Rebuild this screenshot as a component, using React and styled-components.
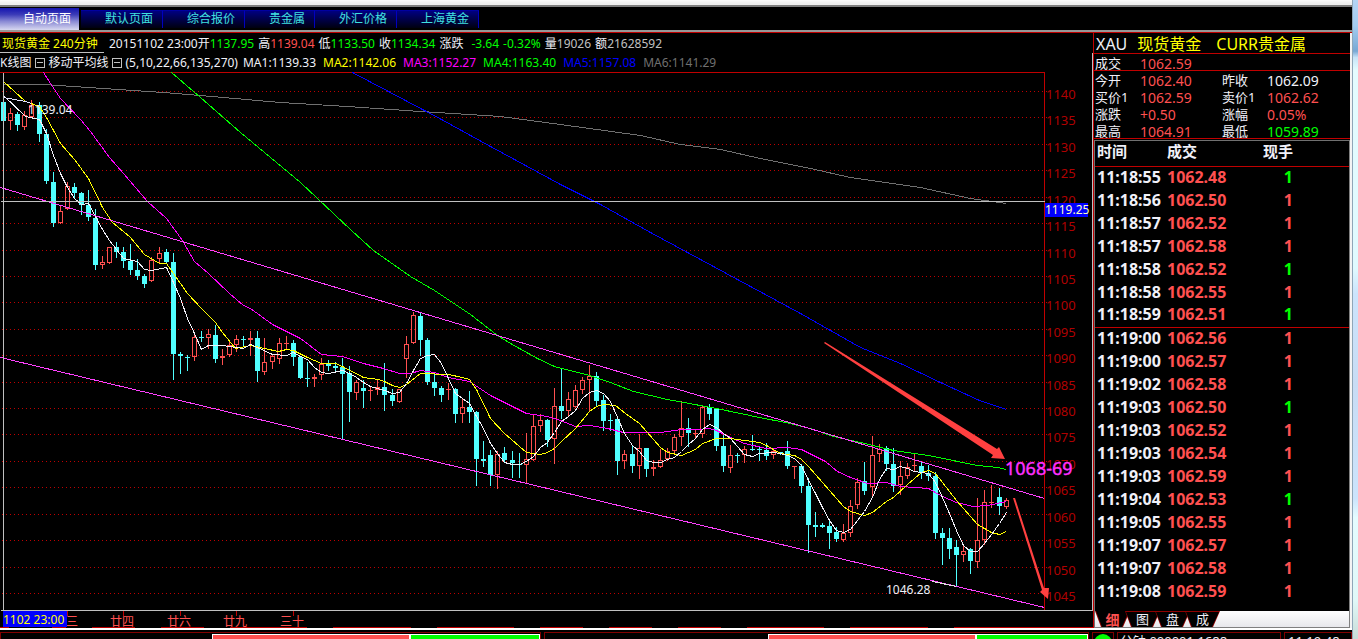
import React from "react";
import styled, { createGlobalStyle, css } from "styled-components";

const Global = createGlobalStyle`
  * { box-sizing: border-box; }
  html, body { margin: 0; background: #000; overflow: hidden; }
  body, button, table {
    font-family: "Noto Sans", "Noto Sans CJK SC", sans-serif;
  }
  button { margin: 0; padding: 0; border: 0; background: none; cursor: pointer; }
`;

const C = {
  red: "#ff5050",
  green: "#00ff00",
  cyan: "#50ffff",
  yellow: "#ffff00",
  magenta: "#ff00ff",
  blue: "#0000ff",
  gray: "#707070",
  white: "#f0f0f8",
  silver: "#c0c0c0",
  line: "#c00000",
};

const Desktop = styled.div`
  display: flex;
  height: 100vh;
  overflow: hidden;
`;

const Window = styled.div`
  flex: 1;
  min-width: 0;
  background: #000;
`;

const Edge = styled.div`
  width: 6px;
  border-left: 1px solid #8fa6b8;
  background: linear-gradient(
    #b4d4f4 0%, #a4ccf0 4%, #78a8d4 8%, #c8e4f8 9%, #e4fcff 11%, #e0faff 42%,
    #cce4fc 46%, #c8dcf4 60%, #cce4fc 78%, #e4fcff 81%, #e0f8f8 94%, #c8dcd8 100%
  );
`;

const TopStrip = styled.div`
  height: 7px;
  background: linear-gradient(#fcfcfc, #f0f0f0 3px);
  border-bottom: 2px solid #808080;
`;

const PageTabs = styled.nav`
  display: flex;
  align-items: center;
  height: 25px;
  border-bottom: 2px solid #989898;
`;

const PageTab = styled.button`
  height: 18px;
  padding: 0 9px 0 24px;
  border-top: 1px solid #0000a0;
  border-right: 1px solid #0000c0;
  background: linear-gradient(#000080, #000010);
  color: #40e0e0;
  font-size: 12px;
  line-height: 16px;
  white-space: nowrap;
  ${(p) =>
    p.$active &&
    css`
      height: 22px;
      padding: 0 8px 0 23px;
      border: 0;
      margin-right: 2px;
      background: linear-gradient(#1414b0, #3c3cb8 30%, #8888d4 60%, #d8d8f0);
      color: #fff;
      line-height: 20px;
    `}
`;

const Body = styled.main`
  display: flex;
  border-top: 1px solid ${C.line};
`;

const ChartPane = styled.section`
  flex: 1;
  min-width: 0;
`;

const InfoRow = styled.div`
  display: flex;
  align-items: center;
  height: ${(p) => p.$h}px;
  font-size: 12px;
  line-height: ${(p) => p.$lh ?? p.$h}px;
  white-space: nowrap;
`;

const Instrument = styled.div`
  height: 20px;
  width: 104px;
  margin-right: 5px;
  padding-left: 2px;
  border-bottom: 1px solid ${C.silver};
  color: ${C.yellow};
`;

const Item = styled.span`
  height: 100%;
  margin-right: ${(p) => p.$gap ?? 4}px;
  color: ${(p) => p.$c ?? C.white};
`;

const Val = styled.span`
  color: ${(p) => p.$c};
`;

const Fold = styled.button`
  width: 10px;
  height: 10px;
  margin-right: 3px;
  border: 1px solid ${C.silver};
  &::after {
    content: "";
    display: block;
    height: 1px;
    margin: 0 1px;
    background: ${C.silver};
  }
`;

const Chart = styled.svg`
  display: block;
  width: 100%;
  height: auto;
  overflow: visible;
  font-family: "Noto Sans", "Noto Sans CJK SC", sans-serif;
  font-size: 12px;
`;

const QuotePane = styled.aside`
  display: flex;
  flex-direction: column;
  width: 259px;
  border-left: 1px solid ${C.line};
  border-right: 2px solid #f4f4f4;
`;

const QuoteTitle = styled.h1`
  display: flex;
  margin: 0;
  height: 21px;
  padding-left: 2px;
  border-bottom: 1px solid ${C.line};
  font-size: 16px;
  font-weight: 400;
  line-height: 22px;
  white-space: nowrap;
`;

const QuoteGrid = styled.dl`
  display: grid;
  grid-template-columns: 45px 82px 45px 1fr;
  grid-auto-rows: 17px;
  height: ${(p) => p.$h}px;
  margin: 0;
  padding-left: 1px;
  border-bottom: 1px solid ${C.line};
  line-height: 19px;
  dt { color: ${C.white}; font-size: 13px; white-space: nowrap; }
  dd { margin: 0; font-size: 14px; }
`;

const TradeBox = styled.div`
  flex: 1;
  display: flex;
  flex-direction: column;
  margin-top: 1px;
  border: 1px solid #707070;
  border-right: 1px solid #808080;
  border-bottom: 1px solid #808080;
`;

const Trades = styled.table`
  width: 100%;
  table-layout: fixed;
  border-collapse: collapse;
  color: ${C.white};
  font-weight: 700;
  text-align: left;
  th {
    height: 25px;
    padding: 0 0 4px 2px;
    border-bottom: 1px solid ${C.line};
    font-size: 15px;
    line-height: 20px;
  }
  td {
    height: 23px;
    padding: 0 0 2px 2px;
    font-size: 16px;
    line-height: 20px;
  }
  th:nth-child(1) { width: 70px; }
  th:nth-child(2) { width: 70px; }
  th:last-child, td:last-child { text-align: right; padding-right: 56px; }
`;

const TradeRow = styled.tr`
  td { border-top: ${(p) => (p.$mark ? `1px solid ${C.line}` : "0")}; }
`;

const DetailTabs = styled.div`
  display: flex;
  height: 16px;
  margin-top: auto;
  background: linear-gradient(#fff, #e8e8ec);
`;

const DetailTab = styled.button`
  position: relative;
  z-index: 0;
  width: 35px;
  height: 16px;
  margin-left: -5px;
  color: ${C.white};
  font-size: 13px;
  line-height: 15px;
  &:first-child { margin-left: 0; }
  ${(p) => p.$active && css`color: ${C.red}; font-weight: 700; font-size: 14px;`}
  &::before, &::after {
    content: "";
    position: absolute;
    z-index: -1;
    inset: 0;
    background: #900000;
    clip-path: polygon(0 0, 100% 0, calc(100% - 7px) 100%, 6px 100%);
  }
  &::after {
    inset: ${(p) => (p.$active ? "0 1px 0 1px" : "1px 1px 0 1px")};
    background: #000;
  }
`;

const StatusBar = styled.footer`
  display: flex;
  gap: 3px;
  height: 24px;
  border-top: 2px solid #fff;
  padding-top: 2px;
`;

const StatusBox = styled.div`
  display: flex;
  flex: ${(p) => p.$flex ?? "none"};
  width: ${(p) => (p.$w ? `${p.$w}px` : "auto")};
  justify-content: ${(p) => p.$justify ?? "flex-start"};
  border: 1px solid #800000;
  padding: 1px ${(p) => p.$pad ?? 0}px 0;
  color: ${C.white};
  font-size: 13px;
  line-height: 15px;
  white-space: nowrap;
`;

const Meter = styled.div`
  display: flex;
  gap: 2px;
  width: ${(p) => p.$w};
  height: 14px;
  border: 1px solid #fff;
  background: #fff;
`;

const MeterPart = styled.div`
  flex: ${(p) => p.$share};
  background: ${(p) => p.$c};
`;

const Lamp = styled.div`
  width: 18px;
  height: 18px;
  border-radius: 50%;
  background: ${C.green};
`;

/* x, high, body top, body bottom, low, 1 = rising (hollow) / 0 = falling */
const candles = [
  [3,100,102,121,125,0],[10,108,113,121,129,1],[17,112,114,125,130,0],[24,111,115,127,129,1],[31,100,105,117,117,1],
  [39,102,105,134,141,0],[46,129,134,181,183,0],[53,172,182,223,226,0],[60,206,211,223,223,1],[67,182,186,209,209,1],
  [74,183,187,193,197,0],[81,192,193,205,214,0],[88,190,205,217,220,0],[95,209,218,265,269,0],[102,256,262,265,268,1],
  [109,247,247,263,263,1],[116,242,247,252,257,0],[123,247,252,261,267,0],[130,244,261,270,274,0],[137,259,270,276,279,0],
  [144,274,276,284,287,0],[151,257,260,281,281,1],[159,247,253,259,262,1],[166,249,252,262,262,0],[173,253,262,354,379,0],
  [180,352,354,356,373,0],[187,355,357,358,370,0],[194,333,337,357,360,1],[201,331,337,338,341,0],[208,329,334,338,348,1],
  [215,325,335,359,362,0],[222,349,356,358,364,1],[229,342,345,355,356,1],[236,335,339,345,351,1],[243,336,339,340,346,0],
  [250,331,338,340,355,1],[257,331,338,371,381,0],[264,338,362,372,374,1],[272,354,356,362,368,1],[279,338,343,359,363,1],
  [286,336,343,344,348,1],[293,340,343,357,365,0],[300,356,357,378,378,0],[307,362,378,379,386,0],[314,374,377,379,386,1],
  [321,358,364,375,379,1],[328,360,364,366,370,0],[335,362,366,368,372,0],[342,358,367,374,439,0],[349,366,373,392,421,0],
  [356,380,382,393,399,1],[363,380,388,391,407,0],[370,386,390,391,400,1],[377,379,387,390,394,1],[384,363,387,395,410,0],
  [392,389,395,401,405,0],[399,389,389,402,402,1],[406,336,344,359,377,1],[413,312,315,343,343,1],[420,313,316,340,355,0],
  [427,338,340,382,384,0],[434,372,382,388,395,0],[441,386,388,395,401,0],[448,383,389,390,399,1],[455,388,389,414,422,0],
  [462,398,407,414,422,1],[469,391,407,412,422,0],[476,411,412,459,485,0],[483,441,459,461,466,0],[490,450,455,475,485,0],
  [497,451,454,475,488,1],[504,447,453,460,462,0],[512,451,460,463,477,0],[519,453,464,465,477,0],[526,433,459,465,482,1],
  [533,414,426,460,460,1],[540,414,420,426,431,1],[547,419,420,440,446,0],[554,388,406,439,463,1],[561,369,406,411,418,0],
  [568,392,399,411,415,1],[575,385,390,407,407,1],[582,377,380,390,393,1],[589,365,376,380,411,1],[596,372,376,401,405,0],
  [603,395,400,421,430,0],[610,414,420,421,430,0],[617,418,419,461,474,0],[624,450,454,461,468,1],[632,445,454,466,472,0],
  [639,434,448,466,478,1],[646,448,448,469,476,0],[653,460,467,469,475,1],[660,449,460,467,467,1],[667,448,451,459,460,1],
  [674,434,437,451,453,1],[681,401,428,437,445,1],[688,418,428,433,446,0],[695,430,433,434,437,1],[702,406,407,434,437,1],
  [709,404,407,414,419,0],[716,408,408,446,450,0],[723,435,446,466,471,0],[730,445,455,468,472,1],[737,453,455,456,462,0],
  [744,446,449,455,462,1],[752,435,449,450,450,0],[759,446,449,450,460,0],[766,443,450,456,459,0],[773,448,451,455,458,1],
  [780,452,452,454,454,0],[787,441,451,466,468,0],[794,466,466,467,478,1],[801,464,466,486,492,0],[808,478,486,525,552,0],
  [815,512,525,527,536,0],[822,523,525,527,527,0],[829,519,526,533,548,0],[836,527,532,539,541,0],[843,524,533,540,541,1],
  [850,500,506,533,536,1],[857,478,482,505,508,1],[864,462,481,491,494,0],[872,436,455,487,497,1],[879,444,449,454,461,1],
  [886,446,448,464,470,0],[893,448,464,486,491,0],[900,461,476,485,494,1],[907,463,467,476,478,1],[914,453,465,466,470,1],
  [921,462,466,473,478,0],[928,465,473,476,480,0],[935,472,476,533,538,0],[942,528,533,538,564,0],[949,528,538,549,558,0],
  [956,540,547,555,586,0],[963,546,551,555,561,1],[970,548,549,561,573,0],[977,498,540,562,567,1],[984,490,502,540,544,1],
  [991,485,502,503,507,1],[999,488,497,506,514,0],[1006,498,500,507,508,1],
];

const averages = [
  [C.gray, "3,84 43,84 163,92 200,95 280,102 347,106 420,111 500,116 560,124 640,135 680,144 720,149 760,158 810,168 850,177 920,187 970,198 1006,203"],
  [C.blue, "352,72 441,119 490,146 560,184 600,204 650,232 700,259 750,286 800,313 830,330 860,347 900,363 940,382 979,400 1006,409"],
  [C.green, "171,72 200,97 240,132 300,182 351,230 373,250 410,276 434,290 470,314 497,335 510,343 537,358 554,366 589,375 610,382 633,391 667,399 716,408 759,417 790,423 813,429 833,436 860,442 893,450 928,455 977,465 997,467 1006,469"],
  [C.magenta, "43,72 50,83 60,98 80,119 90,131 109,157 123,173 147,201 166,218 182,240 194,261 208,273 229,293 243,305 250,308 272,324 300,338 321,354 342,356 363,363 383,368 399,373 410,373 420,370 434,372 448,377 469,381 490,395 526,413 547,416 560,420 575,426 589,425 607,428 623,432 660,432 681,429 697,429 709,428 716,430 730,437 744,443 766,448 787,447 801,449 825,461 837,471 850,477 867,483 886,482 900,486 928,488 942,496 956,502 973,506 987,505 1006,501"],
  [C.yellow, "3,81 25,101 39,106 46,117 60,143 74,159 88,178 102,207 112,222 123,231 130,237 144,254 159,263 166,263 187,293 201,308 215,322 222,332 235,348 250,345 278,351 286,349 293,350 307,357 321,363 335,363 342,366 363,377 378,379 384,381 392,385 399,387 406,384 420,373 448,374 462,377 469,379 476,389 490,418 504,433 526,452 540,454 547,452 554,448 561,441 575,428 589,411 596,406 603,404 615,405 625,413 639,423 660,447 667,452 681,455 695,449 702,443 716,438 730,438 759,442 766,445 780,453 794,455 801,459 808,466 822,482 843,506 850,511 864,515 872,512 886,501 893,497 907,484 921,472 928,470 935,473 956,500 977,524 991,532 999,534 1006,531"],
  [C.white, "3,95 25,116 39,119 46,133 53,155 60,173 67,187 74,198 81,204 88,203 95,216 102,229 109,240 123,258 137,261 144,269 151,270 166,267 173,282 180,298 187,318 194,333 201,349 208,345 222,345 236,347 243,348 250,344 257,347 272,354 286,355 293,352 300,356 307,359 314,367 321,372 328,373 342,370 349,373 356,377 363,382 370,386 384,390 392,393 399,392 406,383 413,370 420,358 427,355 434,354 441,363 448,378 455,393 462,398 469,403 476,416 483,428 490,443 497,453 504,462 512,464 519,464 526,461 533,456 540,447 547,442 554,432 561,421 568,416 575,410 582,398 589,392 596,390 603,393 610,401 617,417 624,433 632,445 639,451 646,460 653,462 660,462 667,459 674,457 681,451 688,444 695,438 702,429 709,424 716,427 723,433 730,438 737,446 744,454 752,456 759,453 773,452 780,453 787,455 794,458 801,465 808,480 815,493 822,507 829,520 836,530 843,532 850,529 857,520 864,511 872,497 879,479 886,468 893,469 900,466 907,468 914,471 928,473 935,482 942,497 949,513 956,530 963,545 970,551 977,551 984,543 991,534 999,523 1006,512"],
];

const prices = Array.from({ length: 20 }, (_, i) => ({
  label: 1140 - i * 5,
  y: Math.round(91 + (i * 502) / 19),
}));

const dates = [[67, "三"], [123, "廿四"], [180, "廿六"], [236, "廿九"], [293, "三十"]];

const scrollMarks = [
  [0, 9], [52, 66], [92, 135], [161, 204], [230, 307], [333, 411], [437, 514], [540, 583],
  [609, 652], [678, 721], [747, 824], [850, 928], [954, 1093],
];

function Candle({ d: [x, high, top, bottom, low, up] }) {
  const color = up ? C.red : C.cyan;
  if (!up) {
    return (
      <g fill={color}>
        <rect x={x} y={high} width="1" height={low - high + 1} />
        <rect x={x - 2} y={top} width="5" height={Math.max(1, bottom - top)} />
      </g>
    );
  }
  const h = Math.max(1, bottom - top);
  return (
    <g fill={color}>
      <rect x={x} y={high} width="1" height={top - high} />
      <rect x={x} y={bottom} width="1" height={low - bottom + 1} />
      {h < 3 ? (
        <rect x={x - 2} y={top} width="5" height={h} />
      ) : (
        <rect x={x - 1.5} y={top + 0.5} width="4" height={h - 1} fill="none" stroke={color} />
      )}
    </g>
  );
}

function CandleChart() {
  return (
    <Chart viewBox="0 72 1093 556" role="img" aria-label="现货黄金 240分钟 K线图">
      <g shapeRendering="crispEdges" fill="none">
        {prices.map((p) => (
          <path key={p.label} d={`M2 ${p.y}.5H1048`} stroke={C.line} strokeDasharray="1 3" />
        ))}
        <path d="M0 72.5H1045M1044.5 72V610" stroke={C.line} />
      </g>
      <g fill="#b00000" fontSize="13">
        {prices.map((p) => (
          <text key={p.label} x="1046" y={p.y + 8}>{p.label}</text>
        ))}
      </g>
      <g shapeRendering="crispEdges">
        {candles.map((d) => <Candle key={d[0]} d={d} />)}
      </g>
      <g shapeRendering="crispEdges" fill="none" transform="translate(0.5 0.5)">
        {averages.map(([color, points]) => (
          <polyline key={color} points={points} stroke={color} />
        ))}
        <path d="M3 97L25 101L31 103" stroke="#e0e0ff" />
        <path d="M0 187L1044 498M0 357L1044 607" stroke="#ff40ff" />
        <path d="M932 581L956 586" stroke="#e0e0e0" />
        <path d="M0 201H1044M3 72V610M0 610H1092M1092 52V610" stroke={C.silver} />
      </g>
      <g fill={C.white}>
        <text x="28" y="114">1139.04</text>
        <text x="886" y="594">1046.28</text>
      </g>
      <rect x="1045" y="203" width="43" height="14" fill={C.blue} />
      <text x="1045" y="214" fill="#ffffc0">1119.25</text>
      <g fill="#ff4040">
        <path d="M825 342L997 449L999 447L1005 459L991 458L993 455L824 343Z" />
        <path d="M1013 498L1015 498L1044 588L1049 588L1048 599L1040 592L1042 590Z" />
      </g>
      <text x="1005" y="475" fontSize="18" fill="#ff30ff" stroke="#ff30ff" strokeWidth="0.4">1068-69</text>
      <g fill={C.red}>
        {dates.map(([x, label]) => (
          <React.Fragment key={label}>
            <rect x={x} y="611" width="1" height="5" fill={C.line} />
            <text x={label.length > 1 ? x - 13 : x - 1} y="626">{label}</text>
          </React.Fragment>
        ))}
      </g>
      <rect x="3" y="611" width="64" height="16" fill={C.blue} />
      <text x="3" y="624" fill={C.yellow}>1102 23:00</text>
      <g fill={C.line}>
        {scrollMarks.map(([a, b]) => (
          <rect key={a} x={a} y="627" width={b - a} height="1" />
        ))}
      </g>
    </Chart>
  );
}

const pageTabs = ["自动页面", "默认页面", "综合报价", "贵金属", "外汇价格", "上海黄金"];

const mas = [
  ["MA1:1139.33", C.white], ["MA2:1142.06", C.yellow], ["MA3:1152.27", C.magenta],
  ["MA4:1163.40", C.green], ["MA5:1157.08", C.blue], ["MA6:1141.29", C.gray],
];

const quotes = [
  ["今开", "1062.40", C.red], ["昨收", "1062.09", C.white],
  ["买价1", "1062.59", C.red], ["卖价1", "1062.62", C.red],
  ["涨跌", "+0.50", C.red], ["涨幅", "0.05%", C.red],
  ["最高", "1064.91", C.red], ["最低", "1059.89", C.green],
];

const trades = [
  ["11:18:55", "1062.48", 0], ["11:18:56", "1062.50", 1], ["11:18:57", "1062.52", 1],
  ["11:18:57", "1062.58", 1], ["11:18:58", "1062.52", 0], ["11:18:58", "1062.55", 1],
  ["11:18:59", "1062.51", 0], ["11:19:00", "1062.56", 1], ["11:19:00", "1062.57", 1],
  ["11:19:02", "1062.58", 1], ["11:19:03", "1062.50", 0], ["11:19:03", "1062.52", 1],
  ["11:19:03", "1062.54", 1], ["11:19:03", "1062.59", 1], ["11:19:04", "1062.53", 0],
  ["11:19:05", "1062.55", 1], ["11:19:07", "1062.57", 1], ["11:19:07", "1062.58", 1],
  ["11:19:08", "1062.59", 1],
];

export default function App() {
  return (
    <Desktop>
      <Global />
      <Window>
        <TopStrip />
        <PageTabs>
          {pageTabs.map((t, i) => <PageTab key={t} $active={i === 0}>{t}</PageTab>)}
        </PageTabs>
        <Body>
          <ChartPane>
            <InfoRow $h={20} $lh={22}>
              <Instrument>现货黄金 240分钟</Instrument>
              <Item $gap={0}>20151102 23:00</Item>
              <Item>开<Val $c={C.green}>1137.95</Val></Item>
              <Item>高<Val $c={C.red}>1139.04</Val></Item>
              <Item>低<Val $c={C.green}>1133.50</Val></Item>
              <Item>收<Val $c={C.green}>1134.34</Val></Item>
              <Item $gap={8}>涨跌</Item>
              <Item $c={C.green}>-3.64</Item>
              <Item $c={C.green}>-0.32%</Item>
              <Item>量<Val $c={C.silver}>19026</Val></Item>
              <Item>额<Val $c={C.silver}>21628592</Val></Item>
            </InfoRow>
            <InfoRow $h={19}>
              <Item>K线图</Item>
              <Fold aria-label="收起主图" />
              <Item>移动平均线</Item>
              <Fold aria-label="收起均线" />
              <Item $gap={5}>(5,10,22,66,135,270)</Item>
              {mas.map(([t, c]) => <Item key={t} $c={c} $gap={7}>{t}</Item>)}
            </InfoRow>
            <CandleChart />
          </ChartPane>
          <QuotePane>
            <QuoteTitle>
              <Item $gap={10}>XAU</Item>
              <Item $gap={15} $c={C.yellow}>现货黄金</Item>
              <Item $c={C.yellow}>CURR贵金属</Item>
            </QuoteTitle>
            <QuoteGrid $h={17}>
              <dt>成交</dt>
              <dd><Val $c={C.red}>1062.59</Val></dd>
            </QuoteGrid>
            <QuoteGrid $h={68}>
              {quotes.map(([k, v, c]) => (
                <React.Fragment key={k}>
                  <dt>{k}</dt>
                  <dd><Val $c={c}>{v}</Val></dd>
                </React.Fragment>
              ))}
            </QuoteGrid>
            <TradeBox>
              <Trades>
                <thead>
                  <tr><th>时间</th><th>成交</th><th>现手</th></tr>
                </thead>
                <tbody>
                  {trades.map(([t, p, up], i) => (
                    <TradeRow key={i} $mark={i === 7}>
                      <td>{t}</td>
                      <td><Val $c={C.red}>{p}</Val></td>
                      <td><Val $c={up ? C.red : C.green}>1</Val></td>
                    </TradeRow>
                  ))}
                </tbody>
              </Trades>
              <DetailTabs>
                {["细", "图", "盘", "成"].map((t, i) => (
                  <DetailTab key={t} $active={i === 0}>{t}</DetailTab>
                ))}
              </DetailTabs>
            </TradeBox>
          </QuotePane>
        </Body>
        <StatusBar>
          <StatusBox $flex="542" $justify="flex-end">
            <Meter $w="328px"><MeterPart $share={197} $c={C.red} /><MeterPart $share={128} $c={C.green} /></Meter>
          </StatusBox>
          <StatusBox $flex="546" $justify="flex-end">
            <Meter $w="320px"><MeterPart $share={205} $c={C.red} /><MeterPart $share={110} $c={C.green} /></Meter>
          </StatusBox>
          <StatusBox $w={22} $pad={1}><Lamp /></StatusBox>
          <StatusBox $w={164} $pad={2}>分钟 000001 1688</StatusBox>
          <StatusBox $w={68} $pad={3}>11:19:48</StatusBox>
        </StatusBar>
      </Window>
      <Edge />
    </Desktop>
  );
}
